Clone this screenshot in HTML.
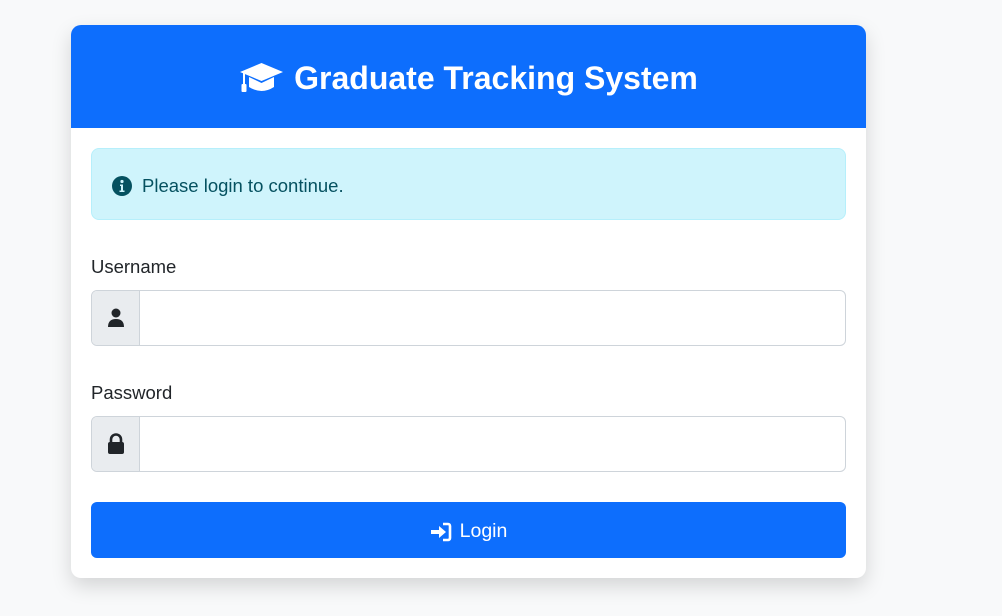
<!DOCTYPE html>
<html><head><style>
body{margin:0;background:#f8f9fa;font-family:"Liberation Sans",sans-serif;width:1002px;height:616px;overflow:hidden}
.card{position:absolute;left:71px;top:25px;width:795px;height:553px;background:#fff;border-radius:10px;box-shadow:0 8px 20px rgba(0,0,0,.15);overflow:hidden}
.hdr{height:103px;box-sizing:border-box;padding-top:3px;background:#0d6efd;color:#fff;display:flex;align-items:center;justify-content:center;font-weight:bold;font-size:32px;gap:10px}
.alert{position:absolute;left:20px;top:123px;background:#cff4fc;border:1px solid #b6effb;border-radius:8px;color:#055160;font-size:18.5px;display:flex;align-items:center;padding:3px 0 0 20px;box-sizing:border-box;width:755px;height:72px;gap:10px}
.lbl{position:absolute;left:20px;font-size:18.5px;color:#212529}
.inp{position:absolute;left:20px;width:755px;height:56px;border:1px solid #ced4da;border-radius:6px;box-sizing:border-box;display:flex;overflow:hidden}
.ic{width:47px;background:#e9ecef;border-right:1px solid #ced4da;display:flex;align-items:center;justify-content:center}
.btn{position:absolute;left:20px;top:477px;width:755px;height:56px;box-sizing:border-box;padding-top:3px;background:#0d6efd;border-radius:6px;color:#fff;font-size:19.5px;display:flex;align-items:center;justify-content:center;gap:8px}
</style></head><body>
<div class="card">
<div class="hdr"><svg width="45" height="34" viewBox="0 0 45 34"><path d="M22.5 2 L44 11 L22.5 20 L1 11Z" fill="#fff"/><path d="M10 16 L10 26 Q22.5 34 35 26 L35 16 L22.5 22 Z" fill="#fff"/><rect x="4" y="12" width="2" height="12" fill="#fff"/><rect x="2.5" y="23" width="5" height="8" rx="1" fill="#fff"/></svg>Graduate Tracking System</div>
<div class="alert"><svg width="20" height="20" viewBox="0 0 20 20"><circle cx="10" cy="10" r="10" fill="#055160"/><circle cx="10" cy="5.5" r="1.6" fill="#cff4fc"/><path d="M8 8.5h3v6h1.5v1.5h-5v-1.5H9v-4.5H8z" fill="#cff4fc"/></svg>Please login to continue.</div>
<div class="lbl" style="top:231px">Username</div>
<div class="inp" style="top:265px"><div class="ic"><svg width="18" height="20" viewBox="0 0 18 20"><circle cx="9" cy="5" r="4.5" fill="#212529"/><path d="M1 19 Q1 11 9 11 Q17 11 17 19Z" fill="#212529"/></svg></div></div>
<div class="lbl" style="top:357px">Password</div>
<div class="inp" style="top:391px"><div class="ic"><svg width="18" height="22" viewBox="0 0 18 22"><path d="M4 10V6.5a5 5 0 0 1 10 0V10" stroke="#212529" stroke-width="2.6" fill="none"/><rect x="1" y="9" width="16" height="12" rx="2" fill="#212529"/></svg></div></div>
<div class="btn"><svg width="22" height="20" viewBox="0 0 22 20"><path d="M1 8h8V4l7 6-7 6v-4H1z" fill="#fff"/><path d="M13 2h5a2 2 0 0 1 2 2v12a2 2 0 0 1-2 2h-5" stroke="#fff" stroke-width="2.6" fill="none"/></svg>Login</div>
</div>
</body></html>
